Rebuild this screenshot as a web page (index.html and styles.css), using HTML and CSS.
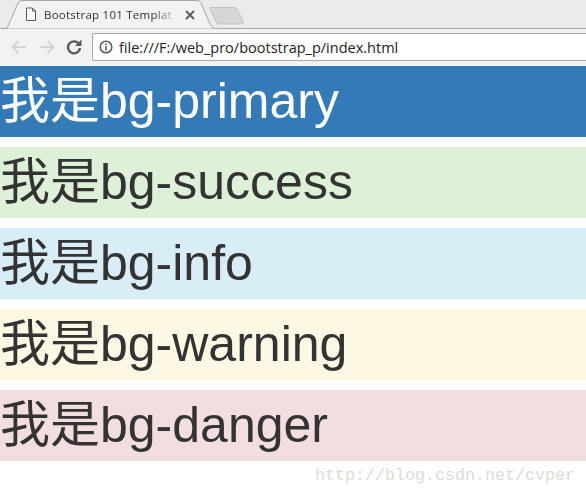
FILE: index.html
```html
<!DOCTYPE html>
<html lang="en">
<head>
    <meta charset="UTF-8">
    <title>Bootstrap 101 Template</title>
    <link rel="stylesheet" href="styles.css">
</head>
<body>

<div class="tabstrip">
    <div class="tab">
        <svg class="tab-shape" width="208" height="29" viewBox="0 0 208 29">
            <path d="M0 28.5H1L12 3Q13 .5 16 .5H191Q194 .5 195 3L204 24Q206 28.5 210 28.5" fill="#f2f2f2" stroke="#a6a6a6"/>
        </svg>
        <svg class="tab-icon" width="12" height="15" viewBox="0 0 12 15">
            <path d="M1.500 1H7.500L10.500 4V13.500H1.500ZM7.500 1V4H10.500" fill="#fff" stroke="#5a5a5a"/>
        </svg>
        <span class="tab-title">Bootstrap 101 Templat</span>
        <svg class="tab-close" width="10" height="10" viewBox="0 0 10 10">
            <path d="M1 1L9 9M9 1L1 9" stroke="#5f5f5f" stroke-width="2"/>
        </svg>
    </div>
    <svg class="new-tab" width="36" height="20" viewBox="0 0 36 20">
        <path d="M1.500 1.500H25Q27 1.500 28 3L34 15Q35 18 32 18H10Q8 18 7 16L1 3Q.5 1.500 1.500 1.500Z" fill="#d6d6d6" stroke="#c2c2c2"/>
    </svg>
</div>

<div class="toolbar">
    <svg class="nav-icon" width="18" height="16" viewBox="0 0 18 16">
        <path d="M16 8H3M8.500 2L2.500 8L8.500 14" fill="none" stroke="#d4d4d4" stroke-width="2"/>
    </svg>
    <svg class="nav-icon" width="18" height="16" viewBox="0 0 18 16">
        <path d="M2 8H15M9.500 2L15.500 8L9.500 14" fill="none" stroke="#d4d4d4" stroke-width="2"/>
    </svg>
    <svg class="nav-icon reload" width="16" height="16" viewBox="0 0 16 16">
        <path d="M13 5A6 6 0 1 0 14 9" fill="none" stroke="#5a5a5a" stroke-width="2.400"/>
        <path d="M9 7H15.500V.5Z" fill="#5a5a5a"/>
    </svg>
    <div class="omnibox">
        <svg class="info-icon" width="14" height="14" viewBox="0 0 14 14">
            <circle cx="7" cy="7" r="5.800" fill="none" stroke="#5a5a5a" stroke-width="1.500"/>
            <path d="M6.200 6H7.800V10.500H6.200ZM6.200 3.400H7.800V5H6.200Z" fill="#5a5a5a"/>
        </svg>
        <span class="url">file:///F:/web_pro/bootstrap_p/index.html</span>
    </div>
</div>

<p class="bar bg-primary">我是bg-primary</p>
<p class="bar bg-success">我是bg-success</p>
<p class="bar bg-info">我是bg-info</p>
<p class="bar bg-warning">我是bg-warning</p>
<p class="bar bg-danger">我是bg-danger</p>

<div class="watermark">http://blog.csdn.net/cvper</div>

</body>
</html>
```

FILE: styles.css
```css
html, body {
    height: 100%;
}

body {
    margin: 0;
    overflow: hidden;
    background-color: #fff;
    color: #333;
    font-family: "Liberation Sans", "Noto Sans CJK SC", sans-serif;
}

.tabstrip {
    display: flex;
    align-items: flex-start;
    height: 28px;
    padding-left: 6px;
    background-color: #ebebeb;
    border-bottom: 1px solid #a6a6a6;
}

.tab {
    position: relative;
    display: flex;
    align-items: center;
    width: 204px;
    height: 29px;
    padding-left: 19px;
    box-sizing: border-box;
}

.tab-shape {
    position: absolute;
    left: 0;
    top: 0;
}

.tab-icon, .tab-title, .tab-close {
    position: relative;
}

.tab-title {
    width: 134px;
    margin-left: 7px;
    overflow: hidden;
    font-family: "Open Sans", sans-serif;
    font-size: 11.5px;
    white-space: nowrap;
    color: #333;
    letter-spacing: 0.25px;
    -webkit-mask-image: linear-gradient(to right, #000 82%, transparent 100%);
    mask-image: linear-gradient(to right, #000 82%, transparent 100%);
}

.tab-close {
    margin-left: 7px;
}

.new-tab {
    margin: 6px 0 0 -1px;
}

.toolbar {
    display: flex;
    align-items: flex-start;
    height: 36px;
    padding: 3px 0 0 10px;
    background-color: #f2f2f2;
    border-top: 1px solid #f2f2f2;
    box-sizing: border-box;
}

.nav-icon {
    margin: 6px 10px 0 0;
}

.reload {
    margin-left: 0;
    margin-right: 11px;
}

.omnibox {
    display: flex;
    align-items: center;
    flex: 1;
    height: 28px;
    margin-left: -1px;
    padding-left: 6px;
    background-color: #fff;
    border: 1px solid #a9a9a9;
    border-right: none;
    border-radius: 2px 0 0 2px;
    box-sizing: border-box;
}

.url {
    margin-left: 6px;
    font-family: "Open Sans", sans-serif;
    font-size: 14.5px;
    color: #222;
}

.bar {
    height: 71px;
    margin: 0 0 10px;
    font-size: 50px;
    line-height: 71px;
}

.toolbar + .bar {
    margin-top: 1px;
}

.bg-primary {
    background-color: #337ab7;
    color: #fff;
}

.bg-success {
    background-color: #dff0d8;
}

.bg-info {
    background-color: #d9edf7;
}

.bg-warning {
    background-color: #fcf8e3;
}

.bg-danger {
    background-color: #f2dede;
}

.watermark {
    position: absolute;
    left: 315px;
    top: 466px;
    font-family: "Liberation Mono", monospace;
    font-size: 16.67px;
    color: #dcdcd6;
}
```
